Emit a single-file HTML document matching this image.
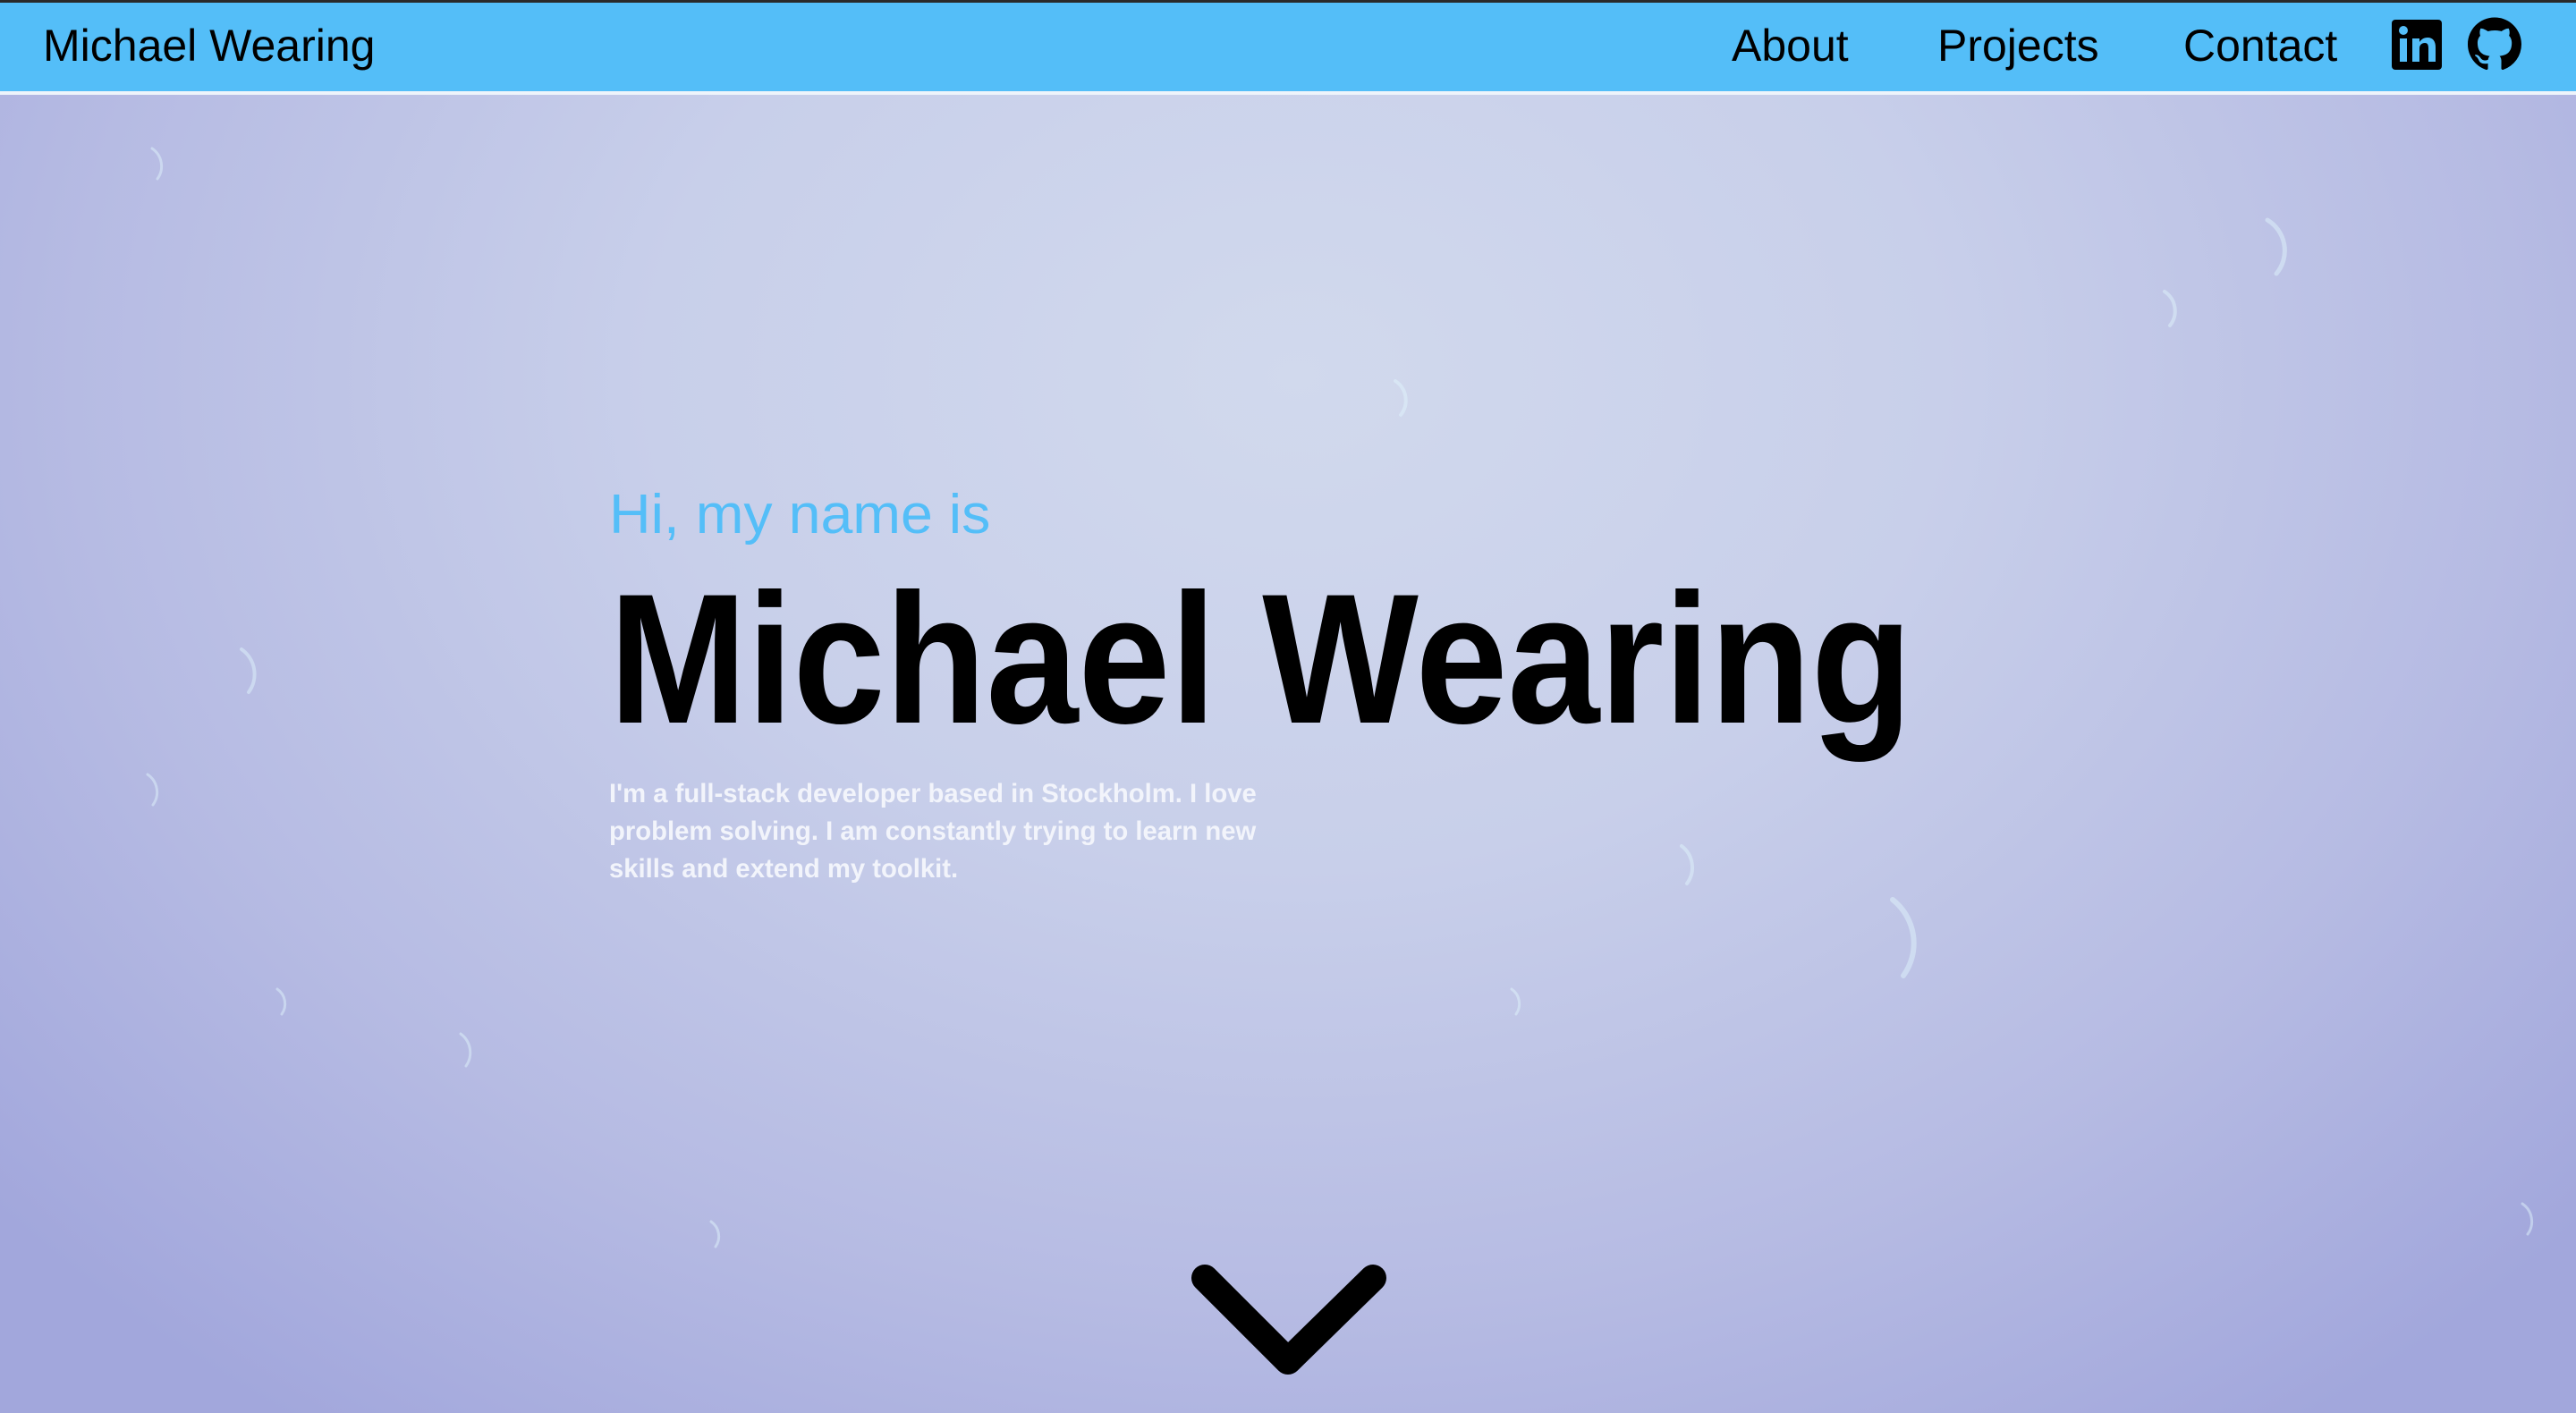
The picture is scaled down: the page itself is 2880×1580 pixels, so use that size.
<!DOCTYPE html>
<html><head><meta charset="utf-8"><style>
*{margin:0;padding:0;box-sizing:border-box}
html,body{width:2880px;height:1580px;overflow:hidden}
body{position:relative;font-family:"Liberation Sans",sans-serif;
background:radial-gradient(ellipse 1900px 1450px at 1450px 420px,#d1d9ed 0%,#c8cfea 38%,#b6bbe3 72%,#a2a7dc 100%);}
.nav{position:absolute;left:0;top:0;width:2880px;height:102px;background:#54bef8;border-top:3px solid #2a2a2a}
.line{position:absolute;left:0;top:102px;width:2880px;height:4px;background:#eef4fb}
.t{position:absolute;line-height:1;white-space:nowrap}
.n{font-size:50px;color:#000;top:26px}
.hi{font-size:62px;color:#54bef8;left:681px;top:545px;transform:scaleX(1.04);transform-origin:left}
.big{font-size:207px;font-weight:bold;color:#000;left:681px;top:633px;transform:scaleX(0.894);transform-origin:left}
.p{position:absolute;left:681px;top:867px;font-size:30px;line-height:42px;color:#f2f4fb;white-space:nowrap;font-weight:bold;transform:scaleX(0.975);transform-origin:left}
</style></head><body>
<svg style="position:absolute;left:0;top:106px" width="2880" height="1474">
<g fill="none" stroke="#dff4fb" stroke-linecap="round" opacity="0.5">
<path d="M2535 140 a40 40 0 0 1 10 60" stroke-width="5"/>
<path d="M2116 900 a62 62 0 0 1 12 85" stroke-width="6"/>
<path d="M270 620 a34 34 0 0 1 8 48" stroke-width="4"/>
<path d="M1560 320 a26 26 0 0 1 6 38" stroke-width="4"/>
<path d="M2420 220 a26 26 0 0 1 6 38" stroke-width="4"/>
<path d="M1880 840 a30 30 0 0 1 6 42" stroke-width="4"/>
<path d="M170 60 a24 24 0 0 1 6 34" stroke-width="3"/>
<path d="M165 760 a24 24 0 0 1 6 34" stroke-width="3"/>
<path d="M515 1050 a26 26 0 0 1 6 36" stroke-width="3"/>
<path d="M2820 1240 a24 24 0 0 1 6 34" stroke-width="3"/>
<path d="M795 1260 a20 20 0 0 1 5 28" stroke-width="3"/>
<path d="M1690 1000 a20 20 0 0 1 5 28" stroke-width="3"/>
<path d="M310 1000 a20 20 0 0 1 5 28" stroke-width="3"/>
</g></svg>
<div class="nav"></div><div class="line"></div>
<div class="t n" style="left:48px">Michael Wearing</div>
<div class="t n" style="left:1936px">About</div>
<div class="t n" style="left:2166px">Projects</div>
<div class="t n" style="left:2441px">Contact</div>
<svg style="position:absolute;left:2674px;top:22px" width="56" height="56" viewBox="0 0 56 56">
<rect width="56" height="56" rx="4" fill="#000"/>
<rect x="9" y="21" width="8" height="26" fill="#54bef8"/><circle cx="13" cy="12" r="5" fill="#54bef8"/>
<path d="M23 21h8v4c2-3 5-5 9-5 6 0 9 4 9 11v16h-8V32c0-4-1-6-4-6s-6 2-6 6v15h-8z" fill="#54bef8"/>
</svg>
<svg style="position:absolute;left:2759px;top:19px" width="60" height="61" viewBox="0 0 16 16">
<path fill="#000" d="M8 0C3.58 0 0 3.580 0 8c0 3.54 2.29 6.53 5.47 7.59.4.07.55-.17.55-.38 0-.19-.01-.82-.01-1.490-2.010.37-2.530-.49-2.690-.94-.09-.23-.48-.94-.82-1.130-.28-.15-.68-.52-.01-.53.63-.01 1.080.58 1.230.82.72 1.210 1.870.87 2.330.66.07-.52.28-.87.51-1.070-1.780-.2-3.640-.89-3.640-3.950 0-.87.31-1.590.82-2.150-.08-.2-.36-1.020.08-2.120 0 0 .67-.21 2.200.82.64-.18 1.320-.27 2-.27.68 0 1.360.09 2 .27 1.530-1.040 2.200-.82 2.200-.82.44 1.100.16 1.920.08 2.120.51.56.82 1.270.82 2.150 0 3.070-1.870 3.750-3.650 3.950.29.25.54.73.54 1.480 0 1.070-.01 1.930-.01 2.200 0 .21.15.46.55.38A8.013 8.013 0 0016 8c0-4.420-3.580-8-8-8z"/>
</svg>
<div class="t hi">Hi, my name is</div>
<div class="t big">Michael Wearing</div>
<div class="p">I'm a full-stack developer based in Stockholm. I love<br>problem solving. I am constantly trying to learn new<br>skills and extend my toolkit.</div>
<svg style="position:absolute;left:1300px;top:1380px" width="280" height="200">
<path d="M47 49 L140 142 L235 49" fill="none" stroke="#000" stroke-width="30" stroke-linecap="round" stroke-linejoin="round"/>
</svg>
</body></html>
